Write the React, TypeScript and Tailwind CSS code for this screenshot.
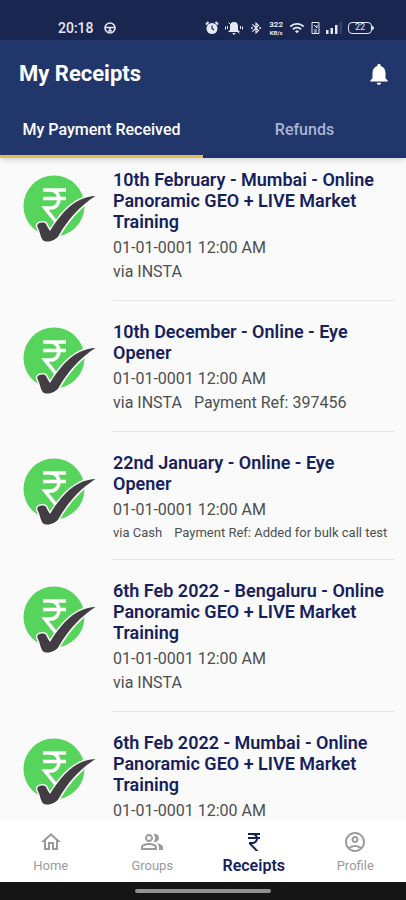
import {
  MdBluetoothConnected,
  MdCurrencyRupee,
  MdNotifications,
  MdOutlineAccountCircle,
  MdOutlineHome,
  MdOutlinePeopleAlt,
  MdWifi,
} from "react-icons/md";
import clsx from "clsx";

interface Receipt {
  title: string;
  date: string;
  via: string;
  paymentRef?: string;
}

const receipts: Receipt[] = [
  {
    title: "10th February - Mumbai - Online Panoramic GEO + LIVE Market Training",
    date: "01-01-0001 12:00 AM",
    via: "INSTA",
  },
  {
    title: "10th December - Online - Eye Opener",
    date: "01-01-0001 12:00 AM",
    via: "INSTA",
    paymentRef: "397456",
  },
  {
    title: "22nd January - Online - Eye Opener",
    date: "01-01-0001 12:00 AM",
    via: "Cash",
    paymentRef: "Added for bulk call test",
  },
  {
    title: "6th Feb 2022 - Bengaluru - Online Panoramic GEO + LIVE Market Training",
    date: "01-01-0001 12:00 AM",
    via: "INSTA",
  },
  {
    title: "6th Feb 2022 - Mumbai - Online Panoramic GEO + LIVE Market Training",
    date: "01-01-0001 12:00 AM",
    via: "INSTA",
  },
];

const navItems = [
  { label: "Home", icon: MdOutlineHome },
  { label: "Groups", icon: MdOutlinePeopleAlt },
  { label: "Receipts", icon: MdCurrencyRupee, active: true },
  { label: "Profile", icon: MdOutlineAccountCircle },
];

const StatusBar = () => (
  <div className="flex h-10 shrink-0 items-center justify-between bg-[#19264f] pt-4 pr-8 pl-[58px] text-[#e4e8f4]">
    <div className="flex items-center gap-2.5">
      <span className="text-sm font-medium">20:18</span>
      <svg viewBox="0 0 12 12" className="size-3" fill="none" stroke="currentColor" strokeWidth="1.6">
        <circle cx="6" cy="6" r="5" />
        <path d="M1 5.500h10M6 5.500V9M4 9h4" />
      </svg>
    </div>
    <div className="flex items-center gap-1.5">
      {/* Alarm */}
      <svg viewBox="0 0 14 14" className="size-3.5">
        <circle cx="7" cy="7.500" r="5.500" fill="currentColor" />
        <path d="M1 3.500 3.500 1M13 3.500 10.500 1" stroke="currentColor" strokeWidth="2" />
        <path d="M7 4.500v3l2 1.500" fill="none" stroke="#19264f" strokeWidth="1.200" />
      </svg>
      {/* Muted */}
      <svg viewBox="0 0 18 14" className="h-3.5 w-[18px]">
        <path d="M9 1c3 0 4 2 4 4.500V9l2 2H3l2-2V5.500C5 3 6 1 9 1zM7.500 12h3c0 2-3 2-3 0z" fill="currentColor" />
        <path d="M3.500 1.500l11 11M.5 5.500v3M2.500 5v3M15.500 5v3M17.500 5.500v3" stroke="currentColor" />
      </svg>
      <MdBluetoothConnected className="size-3.5" />
      <span className="flex flex-col text-center font-bold">
        <span className="text-[8px] leading-[8px]">322</span>
        <span className="text-[6px] leading-[7px]">KB/s</span>
      </span>
      <MdWifi className="size-4" />
      <svg viewBox="0 0 9 12" className="h-3 w-[9px]" fill="none" stroke="currentColor">
        <path d="M1 .5h7v11H1zM3 3l3 3M6 3v3M3 8h3M3 10h3" />
      </svg>
      <svg viewBox="0 0 16 12" className="h-3 w-4" fill="currentColor">
        <path d="M0 8h2.500v4H0zM4.500 6H7v6H4.500zM9 3h2.500v9H9z" />
        <path d="M13.500 0H16v12h-2.500z" opacity=".15" />
      </svg>
      <span className="flex items-center">
        <span className="flex h-3 w-6 items-center justify-center rounded-sm border border-current text-[9px]">
          22
        </span>
        <span className="h-1 w-0.5 rounded-r-sm bg-current" />
      </span>
    </div>
  </div>
);

const checkPath =
  "M15 49c2-2 7-2 8 0 1 2 2 4 4 7C39 37 52 22 72.500 21 57 31 46 43 36 60c-3 6-14 9-17 4-2-4-2-7-4-11-1-2-1-3 0-4z";

const PaidIcon = () => (
  <svg viewBox="0 0 74 70" className="h-[70px] w-[74px] shrink-0" aria-hidden="true">
    <circle cx="31" cy="31" r="30.500" fill="#56d45b" />
    <path
      d="M20 15h23M20 23.500h23M20 15h7c12 0 12 18 0 18h-5l12 15"
      fill="none"
      stroke="#fff"
      strokeWidth="3.600"
    />
    <path d={checkPath} fill="#fafafa" stroke="#fafafa" strokeWidth="3" strokeLinejoin="round" />
    <path d={checkPath} fill="#423c43" />
  </svg>
);

const ReceiptItem = ({ receipt }: { receipt: Receipt }) => {
  // Long references drop to a smaller size to stay on one line
  const isLong = (receipt.paymentRef ?? "").length > 12;

  return (
    <li className="flex gap-4 pr-3 pl-[23px]">
      <div className="mt-1.5">
        <PaidIcon />
      </div>
      <div className="mb-5 flex-1 border-b border-[#e2e2e4] pb-4">
        <h2 className="text-lg leading-[21px] font-semibold text-[#171f5c]">{receipt.title}</h2>
        <p className="mt-1 text-base leading-6 text-[#4c4f50]">{receipt.date}</p>
        <p
          className={clsx(
            "flex gap-3 whitespace-nowrap text-[#4c4f50]",
            isLong ? "text-[13px] leading-[21px]" : "text-base leading-6"
          )}
        >
          <span>via {receipt.via}</span>
          {receipt.paymentRef && <span>Payment Ref: {receipt.paymentRef}</span>}
        </p>
      </div>
    </li>
  );
};

const BottomNav = () => (
  <nav className="grid h-[62px] shrink-0 grid-cols-4 bg-white">
    {navItems.map(({ label, icon: Icon, active }) => (
      <a
        key={label}
        href="#"
        className={clsx(
          "flex flex-col items-center pt-2.5",
          active ? "text-base font-semibold text-[#171f5c]" : "text-[13px] text-[#9b9b9b]"
        )}
      >
        <Icon className="size-6" />
        <span className="leading-6">{label}</span>
      </a>
    ))}
  </nav>
);

export default function App() {
  return (
    <div className="flex h-screen flex-col bg-[#fafafa] font-[Roboto,sans-serif]">
      <StatusBar />
      <header className="z-10 shrink-0 bg-[#21366b] text-white shadow-md">
        <div className="flex items-center justify-between pt-5 pr-3.5 pl-[19px]">
          <h1 className="text-[22px] leading-7 font-bold">My Receipts</h1>
          <button type="button" aria-label="Notifications">
            <MdNotifications className="size-[26px]" />
          </button>
        </div>
        <div role="tablist" className="mt-3.5 grid grid-cols-2 text-base font-medium">
          <button
            type="button"
            role="tab"
            aria-selected="true"
            className="h-14 border-b-3 border-[#e3bd52] pt-0.5"
          >
            My Payment Received
          </button>
          <button
            type="button"
            role="tab"
            aria-selected="false"
            className="h-14 border-b-3 border-[#1c3370] pt-0.5 text-[#a9b3d6]"
          >
            Refunds
          </button>
        </div>
      </header>
      <main className="min-h-0 flex-1 overflow-y-auto [scrollbar-width:none]">
        <ul className="pt-[11px]">
          {receipts.map((receipt) => (
            <ReceiptItem key={receipt.title} receipt={receipt} />
          ))}
        </ul>
      </main>
      <BottomNav />
      <div className="flex h-[18px] shrink-0 justify-center bg-[#151515] pt-[7px]">
        <div className="h-1 w-1/3 rounded-full bg-[#909090]" />
      </div>
    </div>
  );
}
